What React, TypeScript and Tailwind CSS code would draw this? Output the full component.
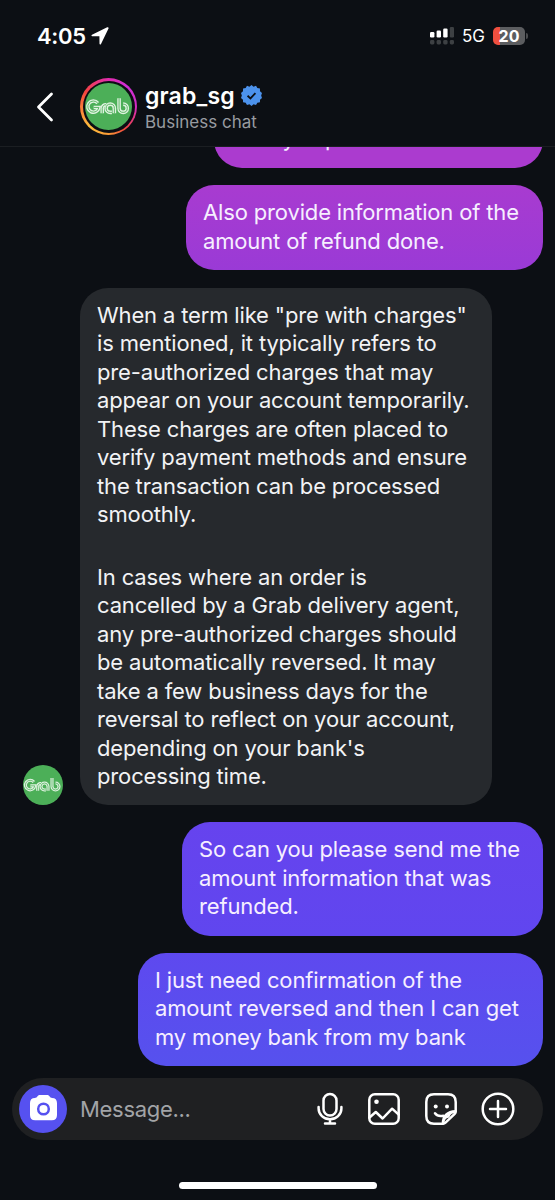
import React from "react";

const LOGO_STROKES = [
  "M13 20.500A5.700 5.700 0 1 0 14.200 25H8.800",
  "M17.600 31v-5.200a3.600 3.600 0 0 1 4-3.600",
  "M30 31V25.800a4.200 4.200 0 1 0-4.200 4.200H27.500",
  "M34.800 15.500v10.300a4.200 4.200 0 1 0 4.200-4.200",
];

function GrabLogo({ className }: { className: string }) {
  return (
    <svg viewBox="0 0 48 48" className={className} fill="none">
      <circle cx="24" cy="24" r="24" fill="#4caf58" />
      {LOGO_STROKES.map((d) => (
        <path key={d} d={d} stroke="#e0f3e1" strokeWidth="3.700" />
      ))}
      {LOGO_STROKES.map((d) => (
        <path key={d + "-inner"} d={d} stroke="#4caf58" strokeWidth="0.900" />
      ))}
    </svg>
  );
}

function StatusBar() {
  return (
    <div className="flex h-[72px] shrink-0 items-center pl-[37px] pr-[27px]">
      <span className="text-[22px] font-semibold leading-none tracking-[-0.3px]">4:05</span>
      <svg viewBox="0 0 18 18" className="ml-[5px] size-[18px]" fill="#fff">
        <path d="M16.2.3 1 7.7c-.9.5-.7 1.5.2 1.500l7.200.1.1 7.500c0 .9 1.100 1.100 1.500.2L17.500 1.500C17.900.6 17.100-.1 16.200.3Z" />
      </svg>
      <svg viewBox="0 0 26 18" className="ml-auto h-[18px] w-[26px]" fill="#fff">
        <rect x="1" y="5" width="4.4" height="5.4" rx="1.2" />
        <rect x="7.6" y="3.6" width="4.4" height="6.8" rx="1.2" />
        <rect x="14.2" y="1.6" width="4.4" height="8.8" rx="1.2" />
        <g fill="#3d4043">
          <rect x="20.8" y="0" width="4.2" height="10.4" rx="1.2" />
          <rect x="1" y="13" width="4.4" height="4.4" rx="1.4" />
          <rect x="7.6" y="13" width="4.4" height="4.4" rx="1.4" />
          <rect x="14.2" y="13" width="4.4" height="4.4" rx="1.4" />
          <rect x="20.8" y="13" width="4.2" height="4.4" rx="1.4" />
        </g>
      </svg>
      <span className="ml-[7px] text-[17px] leading-none">5G</span>
      <div className="ml-[8px] flex h-[18px] w-8 items-center justify-center rounded-[5px] bg-linear-to-r from-[#f04f3f] from-22% to-[#5c5d60] to-22% text-[16px] font-bold leading-none">20</div>
      <div className="ml-px h-[6px] w-[2px] rounded-r-full bg-[#4a4b4e]" />
    </div>
  );
}

function Header() {
  return (
    <header className="flex h-[75px] shrink-0 items-center border-b border-[#1b1e22] pl-[36px] pb-[5px]">
      <svg viewBox="0 0 18 30" className="h-[30px] w-[18px]" fill="none" stroke="#fff" strokeWidth="2.8" strokeLinecap="round" strokeLinejoin="round">
        <path d="M15.500 2 2.500 15l13 13" />
      </svg>
      <div className="ml-[26px] flex size-[57px] items-center justify-center rounded-full bg-[conic-gradient(from_0deg,#e12cae,#cf2fd8_12%,#d22cc0_25%,#f0473f_40%,#fb9a35_50%,#fdbd3d_62%,#fb8a3a_72%,#f5433f_84%,#e12cae)]">
        <div className="flex size-[52px] items-center justify-center rounded-full bg-[#0c0f14]">
          <GrabLogo className="size-[47px]" />
        </div>
      </div>
      <div className="ml-2 flex flex-col pt-[3px]">
        <div className="flex items-center">
          <h1 className="text-[23px] font-semibold leading-[28px] tracking-[0.15px]">grab_sg</h1>
          <svg viewBox="0 0 40 40" className="-mt-px ml-[6px] size-[21px]">
            <path fill="#4c92ec" d="M20 0l3.900 3.200L28.600 1.500l2.500 4.400 5 .8.100 5 3.800 3.300-1.600 5 1.600 4.700-3.800 3.300-.100 5-5 .8-2.500 4.400-4.700-1.700L20 40l-3.900-3.500-4.700 1.700-2.500-4.400-5-.8-.1-5L0 24.700 1.600 20 0 15l3.800-3.300.1-5 5-.8 2.500-4.400 4.700 1.700Z" />
            <path d="m12.500 20.500 5.500 5 9.500-10" fill="none" stroke="#0c0f14" strokeWidth="3.400" />
          </svg>
        </div>
        <p className="pt-px text-[17px] leading-[23px] text-[#989ba0]">Business chat</p>
      </div>
    </header>
  );
}

function Lines({ lines }: { lines: string[] }) {
  return (
    <p>
      {lines.map((line) => (
        <span key={line} className="block whitespace-nowrap">{line}</span>
      ))}
    </p>
  );
}

function Sent({ lines, className }: { lines: string[]; className: string }) {
  return (
    <div className={"shrink-0 self-end rounded-[28px] pl-[17px] text-[#f6efff] " + className}>
      <Lines lines={lines} />
    </div>
  );
}

export default function App() {
  return (
    <div className="flex h-[1200px] w-[555px] flex-col overflow-hidden bg-[#0c0f14] font-['Inter',sans-serif] text-white">
      <StatusBar />
      <Header />
      <main className="flex h-[919px] shrink-0 flex-col justify-end overflow-hidden pr-3 text-[22px] leading-[28.5px] tracking-[-0.15px]">
        <Sent className="mb-[17.500px] h-[56.500px] w-[329px] bg-[#ab3bcf] pt-[13px]" lines={["Kindly explain what it means"]} />
        <Sent className="mb-[17.500px] h-[85px] w-[357px] bg-linear-to-b from-[#a83bd0] to-[#9a3ad6] pt-[13.400px]" lines={["Also provide information of the", "amount of refund done."]} />
        <div className="mb-[17.500px] flex shrink-0 items-end pl-[23px]">
          <GrabLogo className="size-10" />
          <div className="ml-[17px] flex h-[517px] w-[412px] flex-col gap-[34px] rounded-[28px] bg-[#26292d] pl-[17px] pt-[13px] text-[#f2f3f5]">
            <Lines lines={["When a term like \"pre with charges\"", "is mentioned, it typically refers to", "pre-authorized charges that may", "appear on your account temporarily.", "These charges are often placed to", "verify payment methods and ensure", "the transaction can be processed", "smoothly."]} />
            <Lines lines={["In cases where an order is", "cancelled by a Grab delivery agent,", "any pre-authorized charges should", "be automatically reversed. It may", "take a few business days for the", "reversal to reflect on your account,", "depending on your bank's", "processing time."]} />
          </div>
        </div>
        <Sent className="mb-[17px] h-[113.500px] w-[361px] bg-linear-to-b from-[#6643ee] to-[#6046ef] pt-[13px]" lines={["So can you please send me the", "amount information that was", "refunded."]} />
        <Sent className="h-[113.500px] w-[405px] bg-linear-to-b from-[#5e49ef] to-[#5651ee] pt-[13px]" lines={["I just need confirmation of the", "amount reversed and then I can get", "my money bank from my bank"]} />
      </main>
      <footer className="ml-3 mt-[12px] flex h-[62px] w-[531px] shrink-0 items-center rounded-full bg-[#1f2022] pl-[7px] pr-[28px]">
        <div className="flex size-12 items-center justify-center rounded-full bg-[#5651f0]">
          <svg viewBox="0 0 27 26" className="-mt-[2px] h-[26px] w-[27px]">
            <path fill="#fff" d="M10 0h7c1.500 0 2.100.600 2.700 1.600.600 1 1.300 1.400 2.400 1.400 3.200 0 4.900 1.900 4.900 5v12c0 3.500-1.700 5.200-5.200 5.200H5.200C1.700 25.200 0 23.500 0 20V8c0-3.100 1.700-5 4.900-5 1.100 0 1.800-.4 2.400-1.400C7.900.600 8.500 0 10 0Z" />
            <circle cx="13.500" cy="14" r="5.300" fill="none" stroke="#5651f0" strokeWidth="2.500" />
          </svg>
        </div>
        <span className="ml-[13px] text-[22px] tracking-[-0.3px] text-[#a2a4a7]">Message...</span>
        <div className="ml-auto flex items-center text-white">
          <svg viewBox="0 0 26 34" className="h-[34px] w-[26px]" fill="none" stroke="currentColor" strokeWidth="2.500" strokeLinecap="round">
            <rect x="6.500" y="2" width="13" height="21.500" rx="6.500" />
            <path d="M1.600 15v1.500a11.400 10.800 0 0 0 22.800 0V15M13 27.500V31.500M8 31.500h10" />
          </svg>
          <svg viewBox="0 0 32 32" className="ml-[25px] size-[32px]" fill="none" stroke="currentColor" strokeWidth="2.500" strokeLinecap="round" strokeLinejoin="round">
            <rect x="1.300" y="1.300" width="29.400" height="29.400" rx="5.500" />
            <circle cx="8.500" cy="8.800" r="2.300" fill="currentColor" stroke="none" />
            <path d="m1.500 24.500 6.300-5.500 6.800 6.500 9.500-9.800 6.600 6" />
          </svg>
          <svg viewBox="0 0 32 32" className="ml-[25px] size-[32px]" fill="none" stroke="currentColor" strokeWidth="2.500" strokeLinecap="round" strokeLinejoin="round">
            <path d="M18 30.700H9c-5 0-7.700-2.700-7.700-7.700V9c0-5 2.700-7.700 7.700-7.700h14c5 0 7.700 2.700 7.700 7.700v9.500c0 1-.4 1.700-1 2.300L20.500 29.700c-.7.700-1.500 1-2.500 1Z" />
            <path d="M18 30.500c-.3-7 4.500-12.300 12.500-12.300M18.300 30c.2-4.500 1.700-6.200 5-6.500 1-2.800 3.200-4.600 7-4.700M10 20.200c1.800 2.500 4.500 3.300 8.300 2.500" />
            <circle cx="10.700" cy="13.500" r="2" fill="currentColor" stroke="none" />
            <circle cx="22" cy="13.500" r="2" fill="currentColor" stroke="none" />
          </svg>
          <svg viewBox="0 0 34 34" className="ml-[24px] size-[34px]" fill="none" stroke="currentColor" strokeWidth="2.500" strokeLinecap="round">
            <circle cx="17" cy="17" r="15.300" />
            <path d="M17 9v16M9 17h16" />
          </svg>
        </div>
      </footer>
      <div className="mt-[42px] h-[7px] w-[198px] shrink-0 self-center rounded-full bg-white" />
    </div>
  );
}
